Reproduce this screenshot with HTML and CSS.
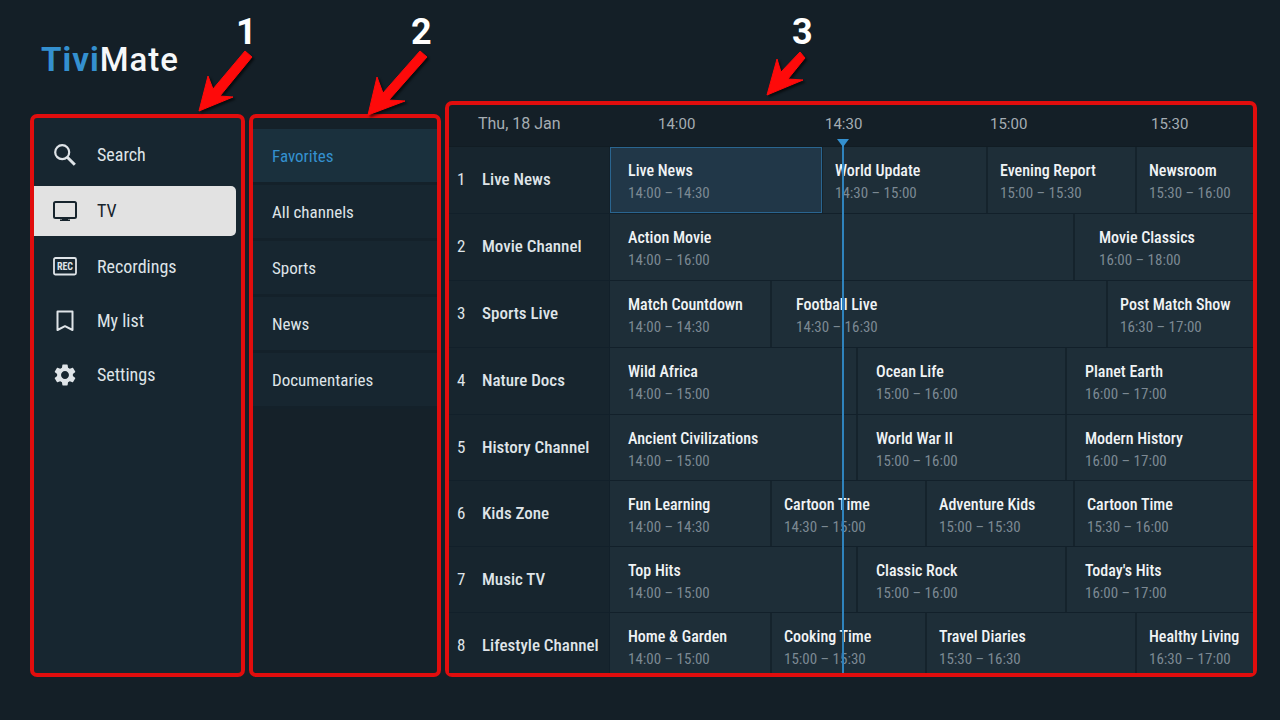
FILE: index.html
```html
<!DOCTYPE html>
<html lang="en">
<head>
    <meta charset="UTF-8">
    <meta name="viewport" content="width=device-width, initial-scale=1.0">
    <title>TiviMate</title>
    <link rel="stylesheet" href="styles.css">
</head>
<body>
    <header class="header">
        <h1 class="logo"><span>Tivi</span>Mate</h1>
    </header>

    <main class="layout">
        <nav class="panel sidebar">
            <div class="callout callout-menu">
                <span class="callout-number">1</span>
                <svg class="callout-arrow" width="60" height="66" viewBox="0 0 60 66">
                    <path d="M46 3 L53 9 L21 48 L34 49 L0 63 L9 28 L14 41 Z"/>
                </svg>
            </div>
            <a href="#" class="menu-item">
                <svg class="icon" viewBox="0 0 24 24"><circle cx="9.2" cy="9.2" r="7" fill="none" stroke="currentColor" stroke-width="2.200"/><path d="M14.300 14.300 L21.800 21.800" stroke="currentColor" stroke-width="3"/></svg>
                <span>Search</span>
            </a>
            <a href="#" class="menu-item active">
                <svg class="icon" viewBox="0 0 24 24"><rect x="1" y="3" width="22" height="16" rx="1.500" fill="none" stroke="currentColor" stroke-width="2"/><path d="M9 19h6v1.500h2v1.500H7v-1.500h2z" fill="currentColor"/></svg>
                <span>TV</span>
            </a>
            <a href="#" class="menu-item">
                <svg class="icon" viewBox="0 0 24 24"><rect x="1" y="3" width="22" height="16.500" rx="1.500" fill="none" stroke="currentColor" stroke-width="1.800"/><text x="12" y="15" class="rec-text">REC</text></svg>
                <span>Recordings</span>
            </a>
            <a href="#" class="menu-item">
                <svg class="icon" viewBox="0 0 24 24"><path d="M4.500 2.500h15v18.500L12 17.200 4.500 21z" fill="none" stroke="currentColor" stroke-width="2" stroke-linejoin="round"/></svg>
                <span>My list</span>
            </a>
            <a href="#" class="menu-item">
                <svg class="icon icon-gear" viewBox="2 2 20 20"><path fill="currentColor" d="M19.140 12.940c.04-.3.06-.61.06-.94 0-.32-.02-.64-.07-.94l2.030-1.580c.18-.14.23-.41.12-.61l-1.920-3.320c-.12-.22-.37-.29-.59-.22l-2.390.96c-.5-.38-1.030-.7-1.620-.94l-.36-2.540c-.04-.24-.24-.41-.48-.41h-3.840c-.24 0-.43.17-.47.41l-.36 2.540c-.59.24-1.130.57-1.620.94l-2.390-.96c-.22-.08-.47 0-.59.22L2.740 8.870c-.12.21-.08.47.12.61l2.030 1.580c-.05.3-.09.63-.09.94s.02.64.07.94l-2.030 1.580c-.18.14-.23.41-.12.61l1.920 3.320c.12.22.37.29.59.22l2.390-.96c.5.38 1.030.7 1.620.94l.36 2.540c.05.24.24.41.48.41h3.840c.24 0 .44-.17.47-.41l.36-2.540c.59-.24 1.130-.56 1.620-.94l2.390.96c.22.08.47 0 .59-.22l1.920-3.320c.12-.22.07-.47-.12-.61l-2.010-1.580zM12 15.600c-1.980 0-3.600-1.620-3.600-3.600s1.620-3.600 3.600-3.600 3.600 1.620 3.600 3.600-1.620 3.600-3.600 3.600z"/></svg>
                <span>Settings</span>
            </a>
        </nav>

        <nav class="panel categories">
            <div class="callout callout-groups">
                <span class="callout-number">2</span>
                <svg class="callout-arrow" width="60" height="68" viewBox="0 0 60 68">
                    <path d="M52 3 L59 9 L21 52 L37 53 L0 67 L9 29 L15 45 Z"/>
                </svg>
            </div>
            <a href="#" class="category active">Favorites</a>
            <a href="#" class="category">All channels</a>
            <a href="#" class="category">Sports</a>
            <a href="#" class="category">News</a>
            <a href="#" class="category">Documentaries</a>
        </nav>

        <section class="panel guide">
            <div class="callout callout-guide">
                <span class="callout-number">3</span>
                <svg class="callout-arrow" width="40" height="48" viewBox="0 0 40 48">
                    <path d="M33 4 L38 10 L21 31 L36 32 L0 47 L10 11 L14 24 Z"/>
                </svg>
            </div>
            <div class="guide-header">
                <div class="guide-date">Thu, 18 Jan</div>
                <div class="times" style="grid-template-columns: 167fr 165fr 161fr 102fr">
                    <span>14:00</span>
                    <span>14:30</span>
                    <span>15:00</span>
                    <span>15:30</span>
                </div>
            </div>

            <div class="row">
                <div class="channel"><span>1</span><b>Live News</b></div>
                <div class="programs" style="grid-template-columns: 213fr 165fr 149fr 116fr">
                    <button class="program selected"><b>Live News</b><span>14:00 – 14:30</span></button>
                    <button class="program tight"><b>World Update</b><span>14:30 – 15:00</span></button>
                    <button class="program tight"><b>Evening Report</b><span>15:00 – 15:30</span></button>
                    <button class="program tight"><b>Newsroom</b><span>15:30 – 16:00</span></button>
                </div>
            </div>
            <div class="row">
                <div class="channel"><span>2</span><b>Movie Channel</b></div>
                <div class="programs" style="grid-template-columns: 465fr 178fr">
                    <button class="program"><b>Action Movie</b><span>14:00 – 16:00</span></button>
                    <button class="program wide"><b>Movie Classics</b><span>16:00 – 18:00</span></button>
                </div>
            </div>
            <div class="row">
                <div class="channel"><span>3</span><b>Sports Live</b></div>
                <div class="programs" style="grid-template-columns: 162fr 336fr 145fr">
                    <button class="program"><b>Match Countdown</b><span>14:00 – 14:30</span></button>
                    <button class="program wide"><b>Football Live</b><span>14:30 – 16:30</span></button>
                    <button class="program tight"><b>Post Match Show</b><span>16:30 – 17:00</span></button>
                </div>
            </div>
            <div class="row">
                <div class="channel"><span>4</span><b>Nature Docs</b></div>
                <div class="programs" style="grid-template-columns: 248fr 209fr 186fr">
                    <button class="program"><b>Wild Africa</b><span>14:00 – 15:00</span></button>
                    <button class="program"><b>Ocean Life</b><span>15:00 – 16:00</span></button>
                    <button class="program"><b>Planet Earth</b><span>16:00 – 17:00</span></button>
                </div>
            </div>
            <div class="row short">
                <div class="channel"><span>5</span><b>History Channel</b></div>
                <div class="programs" style="grid-template-columns: 248fr 209fr 186fr">
                    <button class="program"><b>Ancient Civilizations</b><span>14:00 – 15:00</span></button>
                    <button class="program"><b>World War II</b><span>15:00 – 16:00</span></button>
                    <button class="program"><b>Modern History</b><span>16:00 – 17:00</span></button>
                </div>
            </div>
            <div class="row short">
                <div class="channel"><span>6</span><b>Kids Zone</b></div>
                <div class="programs" style="grid-template-columns: 162fr 155fr 148fr 178fr">
                    <button class="program"><b>Fun Learning</b><span>14:00 – 14:30</span></button>
                    <button class="program tight"><b>Cartoon Time</b><span>14:30 – 15:00</span></button>
                    <button class="program tight"><b>Adventure Kids</b><span>15:00 – 15:30</span></button>
                    <button class="program tight"><b>Cartoon Time</b><span>15:30 – 16:00</span></button>
                </div>
            </div>
            <div class="row short">
                <div class="channel"><span>7</span><b>Music TV</b></div>
                <div class="programs" style="grid-template-columns: 248fr 209fr 186fr">
                    <button class="program"><b>Top Hits</b><span>14:00 – 15:00</span></button>
                    <button class="program"><b>Classic Rock</b><span>15:00 – 16:00</span></button>
                    <button class="program"><b>Today's Hits</b><span>16:00 – 17:00</span></button>
                </div>
            </div>
            <div class="row last">
                <div class="channel"><span>8</span><b>Lifestyle Channel</b></div>
                <div class="programs" style="grid-template-columns: 162fr 155fr 210fr 116fr">
                    <button class="program"><b>Home &amp; Garden</b><span>14:00 – 15:00</span></button>
                    <button class="program tight"><b>Cooking Time</b><span>15:00 – 15:30</span></button>
                    <button class="program tight"><b>Travel Diaries</b><span>15:30 – 16:30</span></button>
                    <button class="program tight"><b>Healthy Living</b><span>16:30 – 17:00</span></button>
                </div>
            </div>

            <div class="now-line" style="--now: 0.363"></div>
        </section>
    </main>
</body>
</html>
```
FILE: styles.css
```css
* {
    margin: 0;
    padding: 0;
    box-sizing: border-box;
}

body {
    background-color: #141f27;
    color: #dfe4e8;
    font-family: 'Roboto Condensed', Roboto, sans-serif;
    font-size: 17px;
    line-height: 22px;
}

a {
    color: inherit;
    text-decoration: none;
}

b {
    font-weight: 500;
}

.header {
    height: 101px;
    padding: 40px 41px 0;
}

.logo {
    font-family: Roboto, sans-serif;
    font-size: 33px;
    font-weight: 500;
    line-height: 40px;
    letter-spacing: 1px;
    color: #f6f8fa;
}

.logo span {
    color: #3490cf;
    font-weight: 700;
}

.layout {
    display: grid;
    grid-template-columns: 215fr 192fr 812fr;
    gap: 4px;
    padding: 0 23px 43px 30px;
}

.panel {
    position: relative;
    border: 4px solid #e10d0d;
    border-radius: 7px;
}

/* left menu */
.sidebar {
    display: flex;
    flex-direction: column;
    gap: 4px;
    margin-top: 13px;
    padding: 12px 5px 0 0;
    background-color: #172630;
    font-size: 18px;
}

.menu-item {
    display: flex;
    align-items: center;
    gap: 20px;
    height: 50px;
    padding-left: 19px;
}

.menu-item.active {
    margin: 2px 0;
    background-color: #e2e2e2;
    border-radius: 0 5px 5px 0;
    color: #17242d;
}

.icon {
    width: 24px;
    height: 24px;
}

.icon-gear {
    padding: 1px;
}

.rec-text {
    font-family: 'Roboto Condensed', Roboto, sans-serif;
    font-size: 10px;
    font-weight: 700;
    text-anchor: middle;
    fill: currentColor;
}

/* channel groups */
.categories {
    margin-top: 13px;
    padding-top: 11px;
    background-color: #152129;
}

.category {
    display: block;
    height: 56px;
    padding: 16px 19px;
    background-color: #172630;
    border-bottom: 3px solid #14212a;
}

.category.active {
    background-color: #1a303d;
    color: #3490cf;
}

/* tv guide */
.guide-header {
    display: flex;
    height: 42px;
    padding-top: 8px;
    border-bottom: 1px solid #111c23;
    font-family: Roboto, sans-serif;
    font-size: 15px;
    color: #a5adb3;
}

.guide-date {
    width: 161px;
    padding-left: 29px;
    font-size: 16px;
}

.times {
    display: grid;
    flex: 1;
    padding-left: 48px;
}

.row {
    display: flex;
    height: 67px;
    border-bottom: 1px solid #12202a;
}

.row.short {
    height: 66px;
}

.row.last {
    height: 60px;
    border-bottom: none;
}

.channel {
    display: flex;
    width: 161px;
    padding: 21px 0 0 8px;
    background-color: #17252e;
    border-right: 1px solid #12202a;
}

.channel span {
    width: 25px;
}

.channel b {
    white-space: nowrap;
}

.programs {
    display: grid;
    flex: 1;
}

.program {
    display: flex;
    flex-direction: column;
    min-width: 0;
    padding: 13px 0 0 18px;
    background-color: #1e2e38;
    border: none;
    border-right: 2px solid #15232c;
    color: #f0f3f5;
    font: inherit;
    font-size: 16px;
    text-align: left;
    white-space: nowrap;
    cursor: pointer;
}

.program:last-child {
    border-right: none;
}

.program span {
    font-size: 15px;
    color: #7c8993;
}

.program.tight {
    padding-left: 12px;
}

.program.wide {
    padding-left: 24px;
}

.program.selected {
    background-color: #213748;
    border-right-width: 1px;
    box-shadow: inset 0 0 0 1px #2a6590;
}

.now-line {
    position: absolute;
    top: 34px;
    bottom: 0;
    left: calc(161px + (100% - 161px) * var(--now));
    width: 2px;
    margin-left: -1px;
    background-color: #2f83bd;
}

.now-line::before {
    content: "";
    position: absolute;
    top: 0;
    left: -5px;
    border: 6px solid transparent;
    border-top: 8px solid #3490cf;
    border-bottom: none;
}

/* numbered callouts above the panels */
.callout {
    position: absolute;
    width: 60px;
    z-index: 1;
}

.callout-menu {
    top: -102px;
    right: -18px;
}

.callout-groups {
    top: -102px;
    right: 9px;
}

.callout-guide {
    top: -89px;
    left: 318px;
}

.callout-number {
    display: block;
    padding-left: 37px;
    font-family: Roboto, sans-serif;
    font-size: 36px;
    font-weight: 700;
    line-height: 32px;
    color: #fff;
}

.callout-groups .callout-number {
    padding-left: 43px;
}

.callout-guide .callout-number {
    padding-left: 25px;
}

.callout-arrow {
    display: block;
    overflow: visible;
    fill: #fe0a0a;
    stroke: #fe0a0a;
    filter: drop-shadow(2px 2px 1px rgba(0,0,0,0.6));
}
```
